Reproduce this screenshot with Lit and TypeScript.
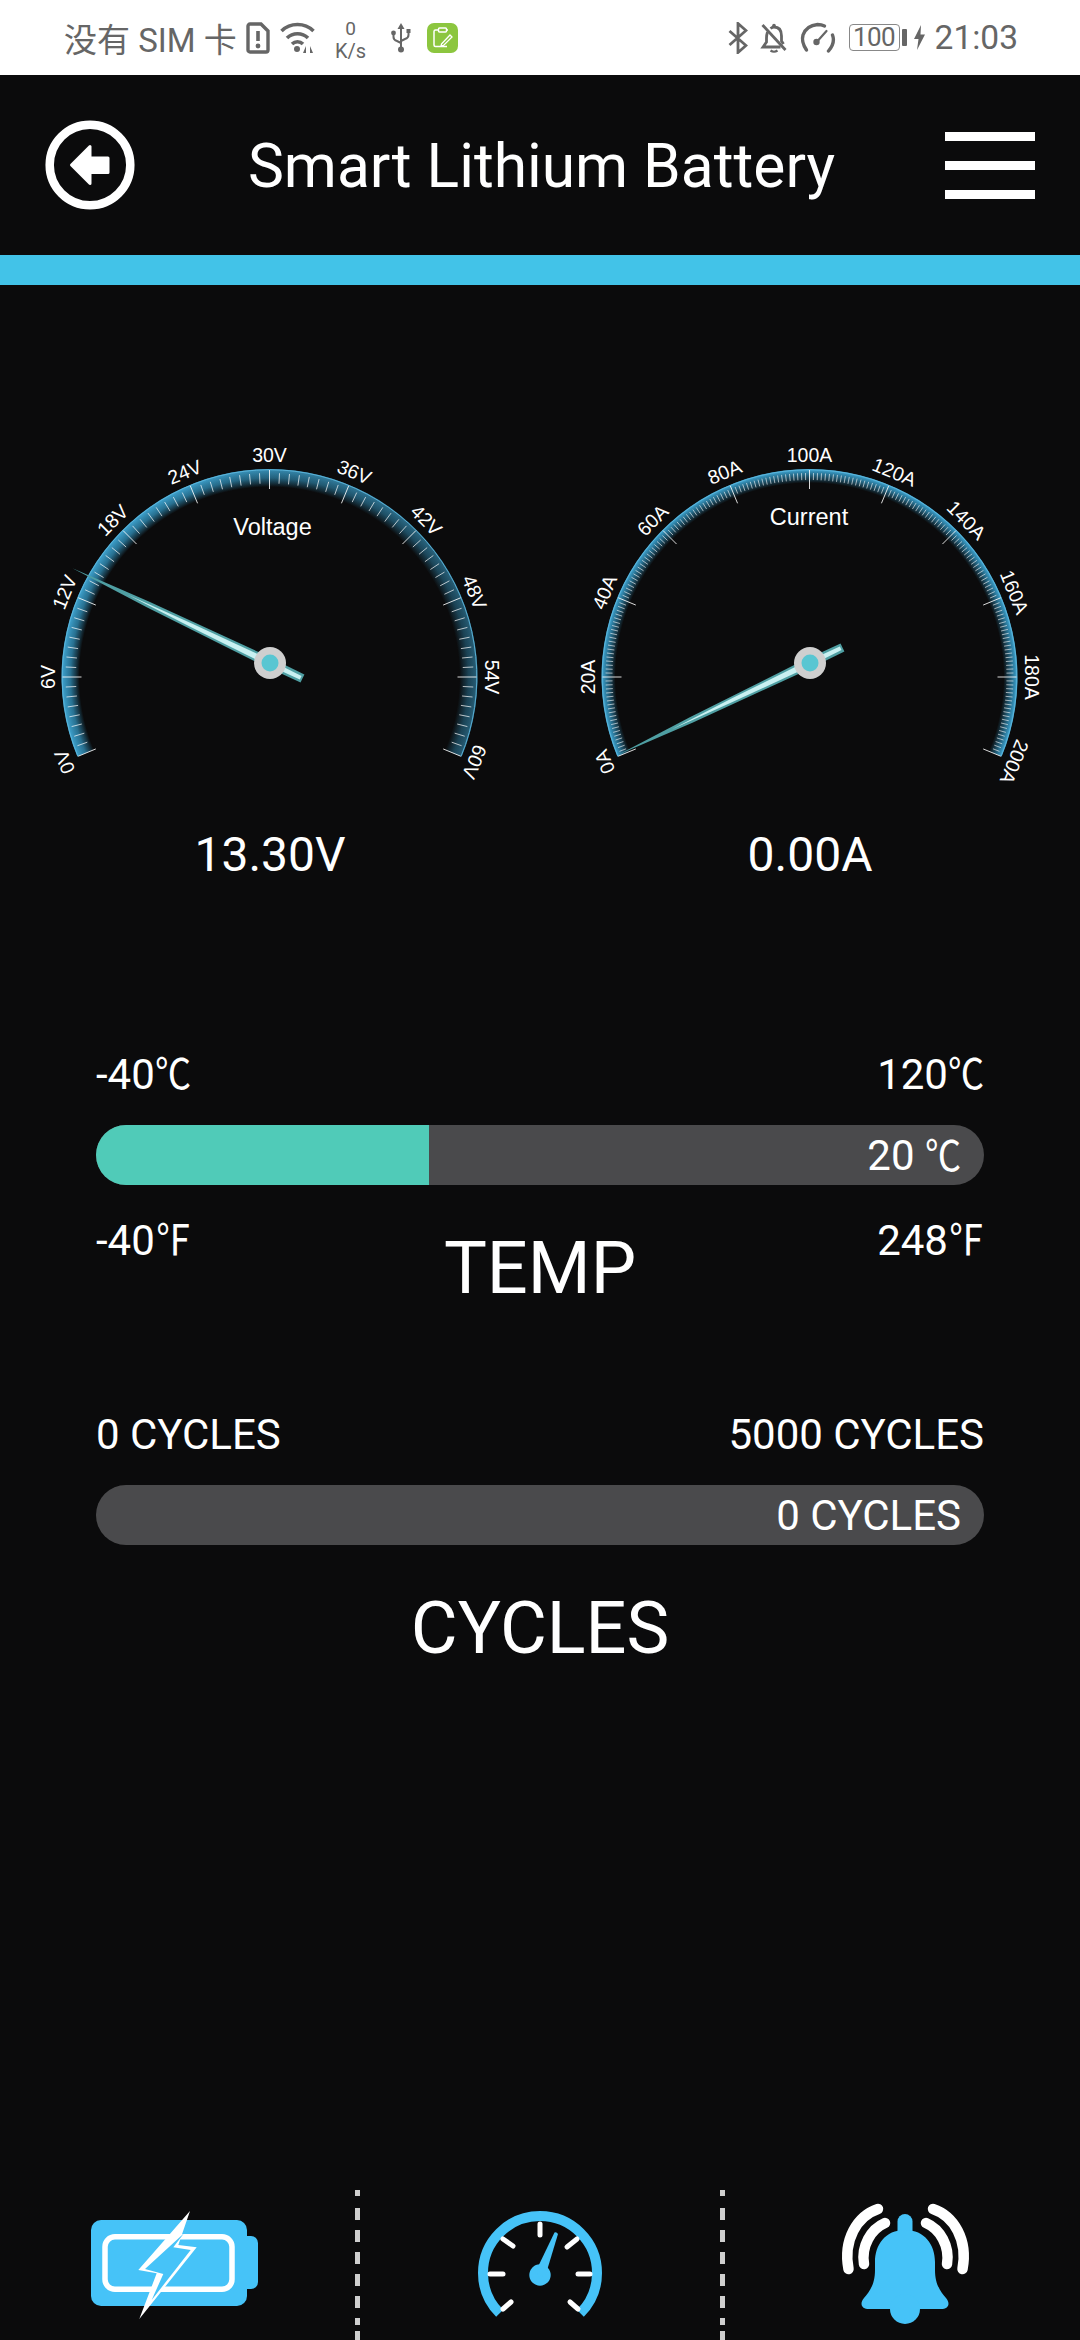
import { LitElement, html, css, svg } from "lit";
import { customElement, property } from "lit/decorators.js";

const CX = 269.5;
const CY = 257;
const HX = 270;
const HY = 243;
const START = -112.5;
const SWEEP = 225;

const pt = (r: number, a: number, cx = CX, cy = CY) => {
  const t = (a * Math.PI) / 180;
  return [cx + r * Math.sin(t), cy - r * Math.cos(t)];
};
const f = (n: number) => n.toFixed(2);

@customElement("gauge-dial")
class GaugeDial extends LitElement {
  @property({ type: Number }) value = 0;
  @property({ type: Number }) max = 60;
  @property() unit = "V";
  @property() title = "";
  @property({ type: Number }) titleX = 272;
  @property({ type: Number }) titleY = 115;
  @property({ type: Number }) minor = 8;
  @property({ type: Number }) length = 219;
  @property({ type: Number }) inner = 190;
  @property({ type: Boolean }) dim = false;

  static styles = css`
    :host { display: block; width: 540px; height: 405px; }
    svg { display: block; }
    .label { font: 19.5px "Liberation Sans", Arial, sans-serif; fill: #fff; text-anchor: middle; }
    .title { font: 23.5px "Liberation Sans", Arial, sans-serif; fill: #fff; text-anchor: middle; }
  `;

  render() {
    const R = 208;
    const [ox0, oy0] = pt(R, START);
    const [ox1, oy1] = pt(R, START + SWEEP);
    const ri = this.inner - 4;
    const [ix0, iy0] = pt(ri, START);
    const [ix1, iy1] = pt(ri, START + SWEEP);
    const band = `M${f(ox0)} ${f(oy0)}A${R} ${R} 0 1 1 ${f(ox1)} ${f(oy1)}L${f(ix1)} ${f(iy1)}A${ri} ${ri} 0 1 0 ${f(ix0)} ${f(iy0)}Z`;
    const rim = `M${f(pt(207.3, START)[0])} ${f(pt(207.3, START)[1])}A207.3 207.3 0 1 1 ${f(pt(207.3, START + SWEEP)[0])} ${f(pt(207.3, START + SWEEP)[1])}`;

    const ticks = [];
    const total = 10 * this.minor;
    for (let i = 0; i <= total; i++) {
      const a = START + (SWEEP * i) / total;
      const major = i % this.minor === 0;
      const [x0, y0] = pt(major ? 207 : 204, a);
      const [x1, y1] = pt(major ? 188 : this.minor > 10 ? 197 : 193.5, a);
      ticks.push(svg`<line x1=${f(x0)} y1=${f(y0)} x2=${f(x1)} y2=${f(y1)} stroke="#fff" stroke-opacity=${major ? 0.85 : this.minor > 10 ? 0.6 : 0.7} stroke-width="1"></line>`);
    }

    const labels = [];
    for (let i = 0; i <= 10; i++) {
      const a = START + (SWEEP * i) / 10;
      labels.push(svg`<text class="label" x=${CX} y=${CY - 215} transform="rotate(${a} ${CX} ${CY})">${(this.max * i) / 10}${this.unit}</text>`);
    }

    const na = -115.6 + (231 * this.value) / this.max;
    const t = (na * Math.PI) / 180;
    const dx = Math.sin(t);
    const dy = -Math.cos(t);
    const nx = -dy;
    const ny = dx;
    const p = (along: number, side: number) => `${f(HX + dx * along + nx * side)},${f(HY + dy * along + ny * side)}`;
    const L = this.length;
    const outer = `${p(L, 0)} ${p(L * 0.62, 3)} ${p(14, 5)} ${p(-36, 4.5)} ${p(-36, -4.5)} ${p(14, -5)} ${p(L * 0.62, -3)}`;
    const core = `${p(L * 0.72, 0)} ${p(L * 0.4, 1.8)} ${p(14, 2.8)} ${p(-34, 2)} ${p(-34, -2)} ${p(14, -2.8)} ${p(L * 0.4, -1.8)}`;

    return html`<svg width="540" height="405" viewBox="0 0 540 405">
      <defs>
        <radialGradient id="glow" gradientUnits="userSpaceOnUse" cx=${CX} cy=${CY} r="208">
          <stop offset=${this.inner / 208} stop-color="#2a7fa5" stop-opacity="0"></stop>
          <stop offset=${(this.inner + 4) / 208} stop-color="#2a7fa5" stop-opacity="0.4"></stop>
          <stop offset=${(this.inner + 9) / 208} stop-color="#2f8ab2" stop-opacity="0.8"></stop>
          <stop offset="0.995" stop-color="#3d9fca" stop-opacity="1"></stop>
        </radialGradient>
        <linearGradient id="shade" gradientUnits="userSpaceOnUse" x1="180" y1="0" x2="460" y2="0">
          <stop offset="0" stop-color="#0b0b0c" stop-opacity="0"></stop>
          <stop offset="1" stop-color="#0b0b0c" stop-opacity="0.45"></stop>
        </linearGradient>
      </defs>
      <path d=${band} fill="url(#glow)"></path>
      ${this.dim ? svg`<path d=${band} fill="url(#shade)"></path>` : ""}
      <path d=${rim} fill="none" stroke="#5fb8de" stroke-width="0.9"></path>
      ${ticks}
      ${labels}
      <text class="title" x=${this.titleX} y=${this.titleY}>${this.title}</text>
      <polygon points=${outer} fill="#4f9fa3"></polygon>
      <polygon points=${core} fill="#c9f1f2"></polygon>
      <circle cx=${HX} cy=${HY} r="16" fill="#cfcfcf"></circle>
      <circle cx=${HX} cy=${HY} r="8.5" fill="#59c6d2"></circle>
    </svg>`;
  }
}

@customElement("app-root")
class AppRoot extends LitElement {
  static styles = css`
    :host { display: block; width: 1080px; height: 2340px; overflow: hidden; background: #0b0b0c; color: #fff; font-family: Roboto, "Noto Sans CJK SC", sans-serif; }
    svg { display: block; flex: none; }
    .page { display: flex; flex-direction: column; height: 2340px; overflow: hidden; }

    .status { height: 75px; flex: none; background: #fff; color: #666; display: flex; align-items: center; padding: 0 62px 0 64px; box-sizing: border-box; }
    .carrier { font-size: 33px; width: 182px; white-space: nowrap; }
    .speed { width: 33px; margin-left: 18px; text-align: center; font-size: 19px; line-height: 23px; margin-top: 5px; }
    .speed span { display: block; font-size: 20px; }
    .wifi { margin-left: 10px; }
    .usb { margin-left: 24px; }
    .note { margin-left: 16px; }
    .spacer { flex: 1; }
    .belloff { margin-left: 12px; }
    .speedo { margin-left: 11px; }
    .batt { margin-left: 13px; width: 51px; height: 27px; box-sizing: border-box; border: 1.5px solid #888; border-radius: 4px; font-size: 26px; line-height: 24px; text-align: center; letter-spacing: -0.6px; }
    .nub { margin-left: 2px; width: 5px; height: 17px; background: #666; border-radius: 1px; }
    .bolt { margin-left: 7px; }
    .time { margin-left: 10px; font-size: 33.5px; white-space: nowrap; }

    .header { height: 180px; flex: none; display: flex; align-items: center; justify-content: space-between; padding: 0 45px; box-sizing: border-box; }
    .title { font-size: 60.5px; margin: 2px 0 0 3px; white-space: nowrap; }
    .menu { display: flex; flex-direction: column; gap: 20px; width: 90px; }
    .menu i { display: block; height: 9px; background: #fff; }
    .rule { height: 30px; flex: none; background: #42c3e8; }

    .gauges { display: flex; margin-top: 135px; }
    .gauge { width: 540px; }
    .value { font-size: 48px; line-height: 60px; text-align: center; }

    .meter { padding: 0 96px; }
    .temp { margin-top: 166px; }
    .cycles { margin-top: 100px; }
    .scale { display: flex; justify-content: space-between; font-size: 42px; line-height: 48px; height: 48px; }
    .track { height: 60px; margin-top: 26px; border-radius: 30px; background: #4a4a4c; position: relative; overflow: hidden; display: flex; align-items: center; justify-content: flex-end; padding-right: 23px; font-size: 42px; line-height: 60px; }
    .fill { position: absolute; left: 0; top: 0; bottom: 0; background: #50cbb8; }
    .track span { position: relative; top: 1px; }
    .deg { display: inline-block; line-height: 1; transform: scaleX(0.86); transform-origin: left center; margin-right: -6px; }
    .foot { display: grid; grid-template-columns: 1fr auto 1fr; font-size: 42px; }
    .foot .min { line-height: 48px; height: 48px; margin-top: 32px; }
    .foot .max { line-height: 48px; height: 48px; margin-top: 32px; text-align: right; }
    .name { font-size: 72px; line-height: 84px; text-align: center; margin-top: 42px; }

    .nav { margin-top: auto; height: 150px; flex: none; display: grid; grid-template-columns: 355px 5px 360px 5px 355px; }
    .tab { display: flex; justify-content: center; }
    .tab.a { padding-right: 6px; padding-top: 15px; }
    .tab.b { padding-top: 15px; }
    .tab.c { padding-left: 5px; padding-top: 10px; }
  `;

  render() {
    return html`<div class="page">
      <div class="status">
        <div class="carrier">没有 SIM 卡</div>
        <svg class="sim" width="24" height="32" viewBox="0 0 24 32"><path d="M4 2H15L22 9V28a2 2 0 0 1-2 2H4a2 2 0 0 1-2-2V4a2 2 0 0 1 2-2Z" fill="none" stroke="#666" stroke-width="3.4"/><path d="M12 9V19" stroke="#666" stroke-width="3.6"/><circle cx="12" cy="24" r="2.4" fill="#666"/></svg>
        <svg class="wifi" width="36" height="32" viewBox="0 0 36 32" fill="none" stroke="#666" stroke-width="3.6"><path d="M1.500 9A23 23 0 0 1 33.500 9"/><path d="M7 16A15 15 0 0 1 28 16"/><path d="M12 22A8 8 0 0 1 23 22"/><circle cx="17" cy="27" r="3" fill="#666" stroke="none"/><path d="M26 24L23 31H26ZM30 24V31L33 31Z" fill="#666" stroke="none"/></svg>
        <div class="speed">0<span>K/s</span></div>
        <svg class="usb" width="20" height="32" viewBox="0 0 20 32" fill="none" stroke="#666" stroke-width="2"><path d="M10 5V27"/><path d="M10 1L13.500 7H6.500Z" fill="#666" stroke="none"/><circle cx="10" cy="27.500" r="3" fill="#666" stroke="none"/><path d="M2.500 11V15Q2.500 18 6 19L10 21"/><path d="M17.500 9V13Q17.500 16 14 17L10 19"/><circle cx="2.500" cy="11" r="2.400" fill="#666" stroke="none"/><rect x="15.500" y="7" width="4" height="4" fill="#666" stroke="none"/></svg>
        <svg class="note" width="31" height="30" viewBox="0 0 31 30"><rect width="31" height="30" rx="7" fill="#8cc63f"/><path d="M11 7H8.500a1.500 1.500 0 0 0-1.500 1.500V22a1.500 1.500 0 0 0 1.500 1.500H20M21 7H20" fill="none" stroke="#fff" stroke-width="1.500"/><rect x="11.500" y="5" width="8" height="4" rx="1" fill="none" stroke="#fff" stroke-width="1.500"/><path d="M14.500 21L23 12L25 14L16.500 22.500L14 23Z" fill="none" stroke="#fff" stroke-width="1.300"/></svg>
        <div class="spacer"></div>
        <svg width="20" height="32" viewBox="0 0 20 32" fill="none" stroke="#666" stroke-width="2.800"><path d="M1.500 9L18 23.500L10 30.500V1.500L18 8.500L1.500 23"/></svg>
        <svg class="belloff" width="28" height="32" viewBox="0 0 27 32" fill="none" stroke="#666" stroke-width="2.800"><path d="M2 3L25 28"/><path d="M7 10Q6 13 6 16V20L2.500 25H20"/><path d="M10 6.500Q12 5 13.500 5Q21 5 21 14V19L23 22"/><circle cx="13.500" cy="3.500" r="1.800" fill="#666" stroke="none"/><path d="M10 28.500Q13.500 31 17 28.500" stroke-width="2.200"/></svg>
        <svg class="speedo" width="37" height="32" viewBox="0 0 36 32" fill="none" stroke="#666" stroke-width="3.4" stroke-linecap="round"><path d="M7 28Q1.500 20 3.500 13Q7 3.500 18 2.500Q22 2.500 25 4"/><path d="M33 13Q36 21 29 29"/><path d="M27 9L19 18" stroke-width="2.200"/><circle cx="17" cy="20" r="3.200" fill="#666" stroke="none"/></svg>
        <div class="batt">100</div>
        <div class="nub"></div>
        <svg class="bolt" width="11" height="25" viewBox="0 0 11 25"><path d="M7 0L0 14H4.500L3 25L11 9.500H6.500Z" fill="#666"/></svg>
        <div class="time">21:03</div>
      </div>

      <div class="header">
        <svg width="90" height="90" viewBox="0 0 90 90"><circle cx="45" cy="45" r="40.300" fill="none" stroke="#fff" stroke-width="8.500"/><path d="M26.500 45L45 26.500V38H63V52.500H45V63.500Z" fill="#fff" stroke="#fff" stroke-width="3" stroke-linejoin="round"/></svg>
        <div class="title">Smart Lithium Battery</div>
        <div class="menu"><i></i><i></i><i></i></div>
      </div>
      <div class="rule"></div>

      <div class="gauges">
        <div class="gauge">
          <gauge-dial .value=${13.3} .max=${60} unit="V" title="Voltage" .titleX=${272.5} .titleY=${115} .minor=${8} .length=${219} .inner=${190} dim></gauge-dial>
          <div class="value">13.30V</div>
        </div>
        <div class="gauge">
          <gauge-dial .value=${0} .max=${200} unit="A" title="Current" .titleX=${269} .titleY=${105} .minor=${20} .length=${212.6} .inner=${194}></gauge-dial>
          <div class="value">0.00A</div>
        </div>
      </div>

      <div class="meter temp">
        <div class="scale"><span>-40<span class="deg">℃</span></span><span>120<span class="deg">℃</span></span></div>
        <div class="track"><div class="fill" style="width:${((20 + 40) / 160) * 100}%"></div><span>20 <span class="deg">℃</span></span></div>
        <div class="foot"><span class="min">-40<span class="deg">℉</span></span><div class="name">TEMP</div><span class="max">248<span class="deg">℉</span></span></div>
      </div>

      <div class="meter cycles">
        <div class="scale"><span>0 CYCLES</span><span>5000 CYCLES</span></div>
        <div class="track"><span>0 CYCLES</span></div>
        <div class="name">CYCLES</div>
      </div>

      <div class="nav">
        <div class="tab a">
          <svg width="180" height="125" viewBox="0 0 180 125"><rect x="6" y="15" width="156" height="86" rx="10" fill="#46c3f8"/><rect x="150" y="31" width="23" height="53" rx="7" fill="#46c3f8"/><rect x="20" y="31.800" width="127" height="52.500" rx="10" fill="none" stroke="#fff" stroke-width="5.500"/><polygon points="105,6 53.300,65 71.700,68.300 54.300,114 111.700,42.300 93.300,40" fill="#fff"/><polygon points="99,28.300 60,64 78.300,69 66.700,95 105.700,45 88.300,42.300" fill="#46c3f8"/></svg>
        </div>
        <svg width="5" height="150" viewBox="0 0 5 150"><path d="M2.500 0V150" stroke="#cfcfcf" stroke-width="5" stroke-dasharray="6 12 12 10 12 10 12 10 12 10 12 10 7 6 12"/></svg>
        <div class="tab b">
          <svg width="140" height="125" viewBox="0 0 140 125"><path d="M29.700 108.300A57 57 0 1 1 110.300 108.300" fill="none" stroke="#46c3f8" stroke-width="10"/><g stroke="#fff" stroke-width="5" stroke-linecap="round"><path d="M70 19V30"/><path d="M20 69H33"/><path d="M108 69H120"/><path d="M33 34L43 41"/><path d="M107 34L97 42"/><path d="M41 97L33 104"/><path d="M100 97L108 104"/></g><circle cx="70" cy="70" r="10.700" fill="#46c3f8"/><path d="M65 68L84.500 27.500Q86.500 26.500 88 29L75 72Z" fill="#46c3f8"/></svg>
        </div>
        <svg width="5" height="150" viewBox="0 0 5 150"><path d="M2.500 0V150" stroke="#cfcfcf" stroke-width="5" stroke-dasharray="6 12 12 10 12 10 12 10 12 10 12 10 7 6 12"/></svg>
        <div class="tab c">
          <svg width="140" height="130" viewBox="0 0 140 130"><rect x="62.500" y="14" width="15" height="24" rx="7.500" fill="#46c3f8"/><path d="M70 30C50 30 40 45 40 62V70C40 85 34 92 29 98C24 104 27 109 34 109H106C113 109 116 104 111 98C106 92 100 85 100 70V62C100 45 90 30 70 30Z" fill="#46c3f8"/><circle cx="70" cy="109" r="15" fill="#46c3f8"/><g fill="none" stroke="#fff" stroke-width="10.500" stroke-linecap="round"><path d="M13.500 69C8 40 22 16 43 9"/><path d="M29 64C26 46 36 29 50 23"/><path d="M127.500 69C133 40 119 16 98 9"/><path d="M112 64C115 46 105 29 91 23"/></g></svg>
        </div>
      </div>
    </div>`;
  }
}
